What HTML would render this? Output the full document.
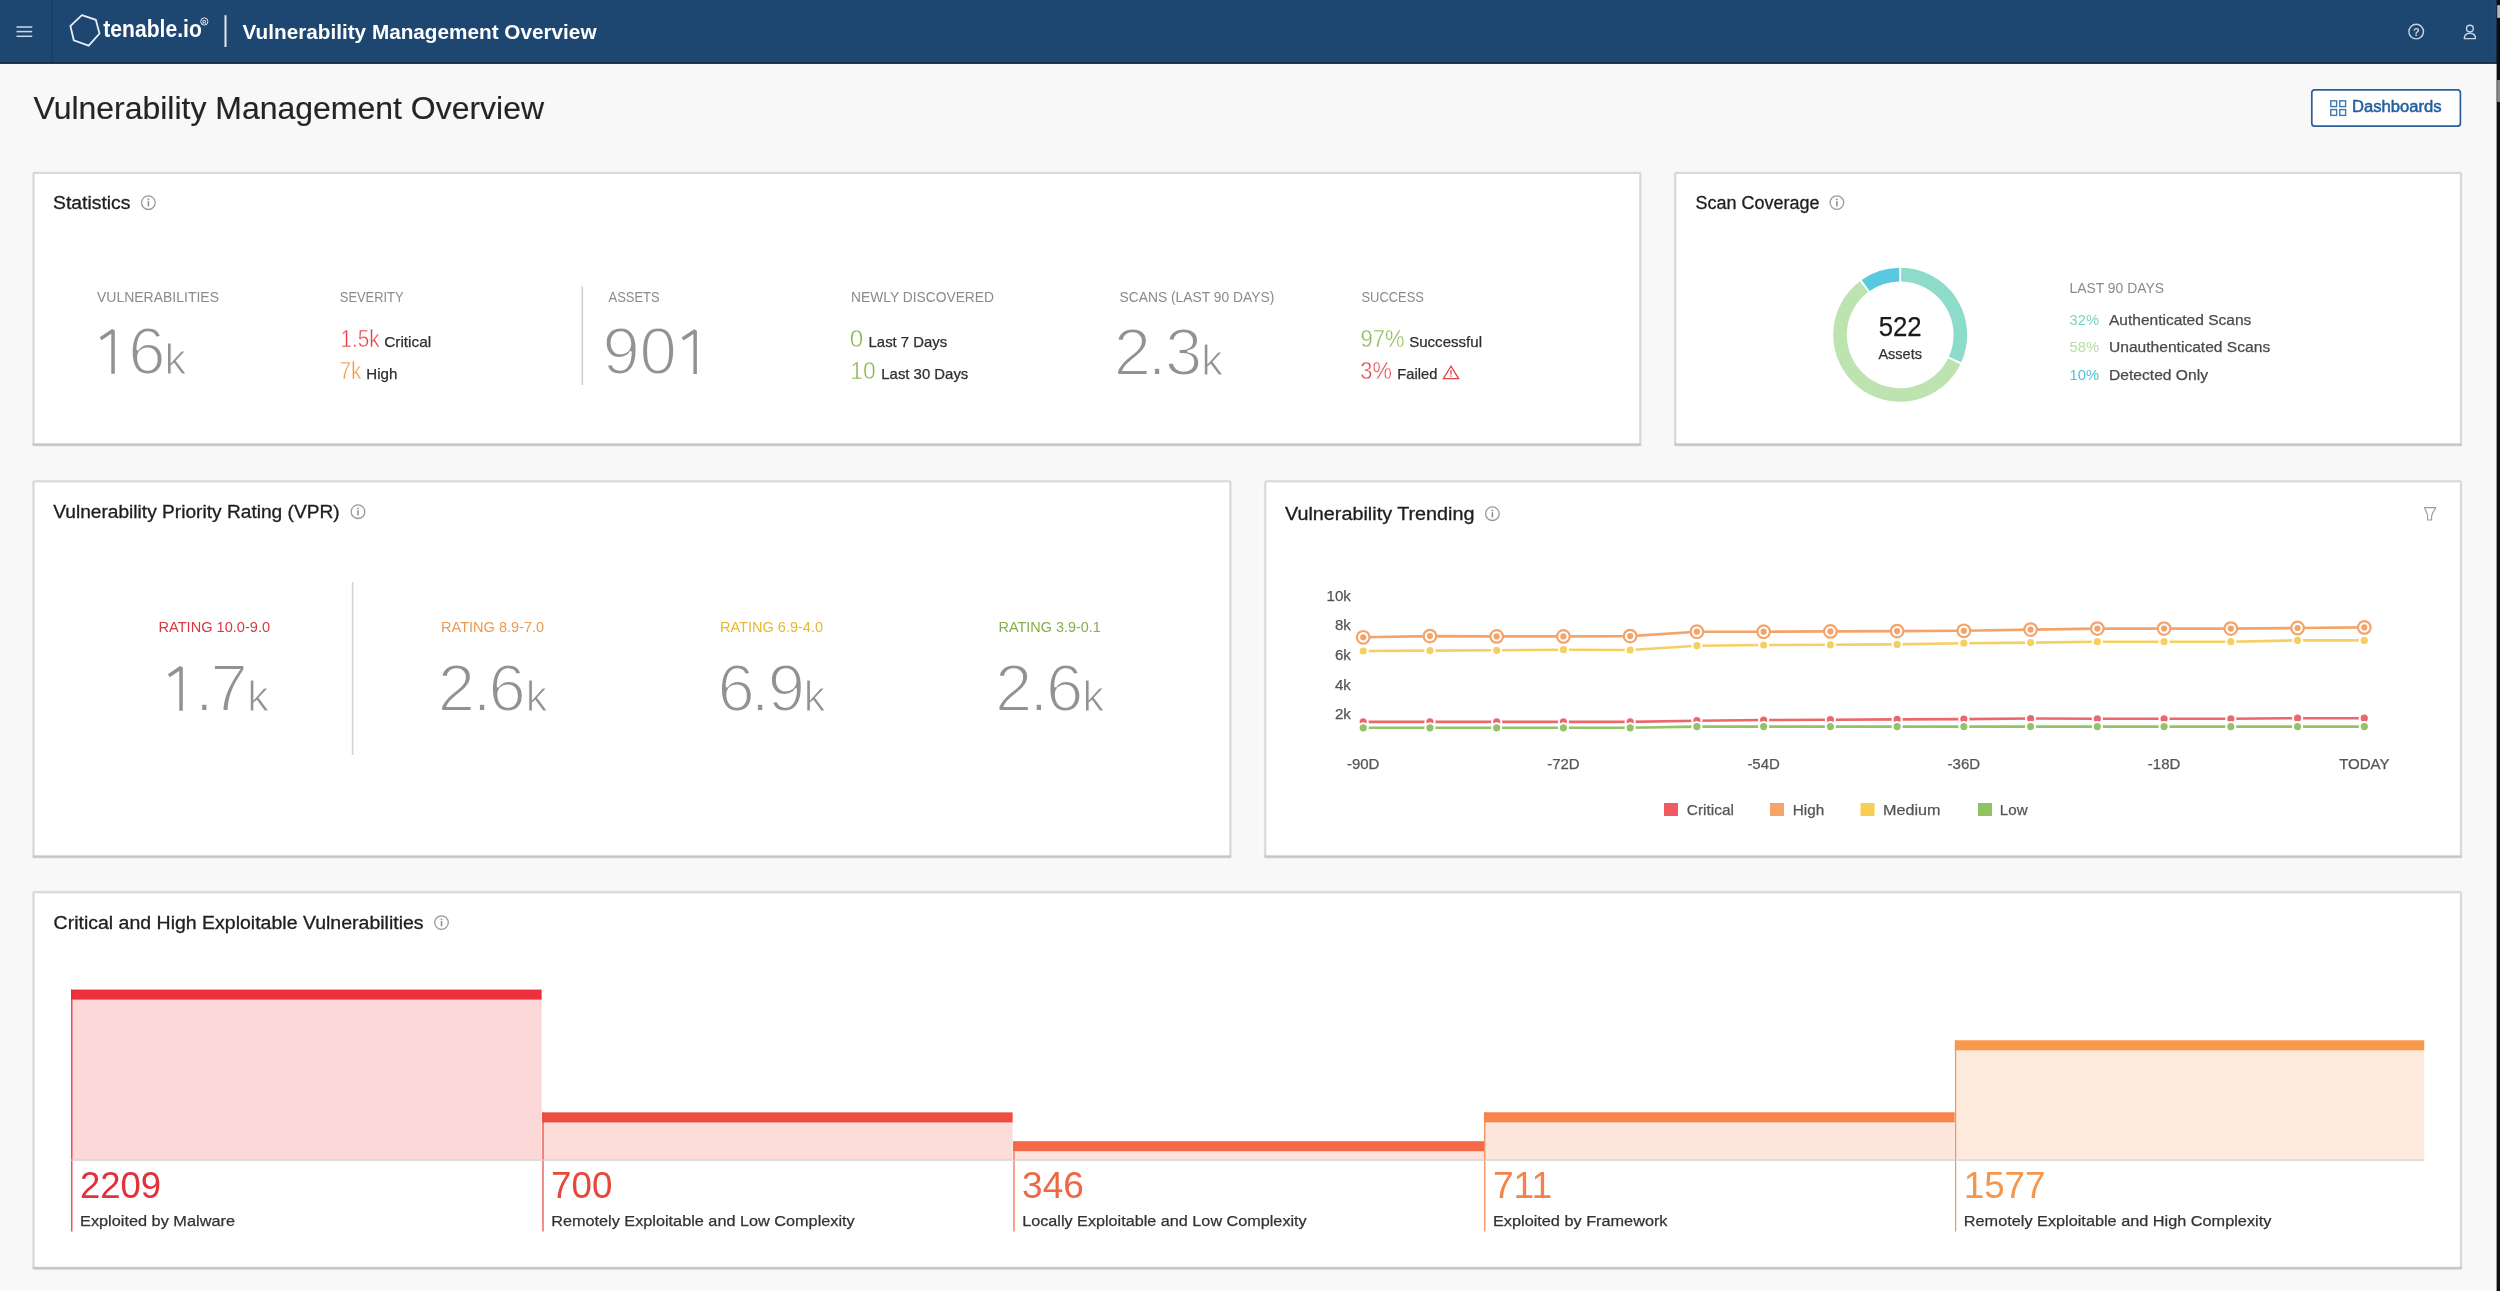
<!DOCTYPE html>
<html><head><meta charset="utf-8"><title>Vulnerability Management Overview</title>
<style>
html,body{margin:0;padding:0;width:2500px;height:1291px;overflow:hidden;background:#f8f8f8;}
svg{display:block;font-family:"Liberation Sans", sans-serif;will-change:transform;}
</style></head><body>
<svg width="2500" height="1291" viewBox="0 0 2500 1291">
<rect x="0" y="0" width="2500" height="1291" fill="#f8f8f8"/>
<rect x="0" y="0" width="2500" height="63.8" fill="#1d4770"/>
<rect x="0" y="59.5" width="2500" height="2.5" fill="#22476d"/>
<rect x="0" y="62" width="2500" height="1.8" fill="#15304c"/>
<rect x="51.5" y="0" width="1.5" height="62" fill="#193e63"/>
<rect x="16.5" y="26.25" width="15.7" height="1.5" fill="#c9d9ea"/>
<rect x="16.5" y="30.85" width="15.7" height="1.5" fill="#c9d9ea"/>
<rect x="16.5" y="35.55" width="15.7" height="1.5" fill="#c9d9ea"/>
<polygon points="81.8,15.2 95.8,19.8 99.5,33.5 88.7,45.6 73.8,40.3 70.4,26" fill="none" stroke="#e6eef7" stroke-width="1.8" stroke-linejoin="miter"/>
<text x="103.3" y="37.4" font-size="24" fill="#ffffff" font-weight="bold" textLength="98.5" lengthAdjust="spacingAndGlyphs">tenable.io</text>
<circle cx="204.3" cy="21.5" r="3.6" fill="none" stroke="#dfe8f2" stroke-width="1"/>
<text x="204.3" y="23.6" font-size="5.5" fill="#dfe8f2" text-anchor="middle" font-weight="bold">R</text>
<rect x="224.5" y="15.2" width="2" height="31.8" fill="#e1e9f2"/>
<text x="242.5" y="38.6" font-size="21" fill="#ffffff" font-weight="bold" textLength="354" lengthAdjust="spacingAndGlyphs">Vulnerability Management Overview</text>
<circle cx="2416.2" cy="31.6" r="7.3" fill="none" stroke="#c6d4e3" stroke-width="1.4"/>
<text x="2416.3" y="35.6" font-size="11" fill="#c6d4e3" text-anchor="middle" font-weight="bold">?</text>
<circle cx="2469.9" cy="28.6" r="3.4" fill="none" stroke="#c6d4e3" stroke-width="1.4"/>
<path d="M2464.3 38.6 C2464.3 35.2 2466.6 33.2 2469.9 33.2 C2473.2 33.2 2475.5 35.2 2475.5 38.6 Z" fill="none" stroke="#c6d4e3" stroke-width="1.4" stroke-linejoin="round"/>
<rect x="2489" y="0" width="0.8" height="61" fill="#1a4169"/>
<rect x="2496.6" y="0" width="3.4" height="1291" fill="#0e0e0e"/>
<rect x="2497.2" y="5" width="2.8" height="13" rx="1" fill="#b9b9b9"/>
<rect x="2497.2" y="80" width="2.8" height="22" fill="#8a8a8a"/>
<text x="33.5" y="119" font-size="30.5" fill="#242424" textLength="510.5" lengthAdjust="spacingAndGlyphs" stroke="#242424" stroke-width="0.15">Vulnerability Management Overview</text>
<rect x="2311.8" y="89.8" width="148.6" height="36.4" rx="3" fill="#ffffff" stroke="#2b5f9b" stroke-width="1.7"/>
<rect x="2330.8" y="100.8" width="5.8" height="5.8" fill="none" stroke="#3d78b3" stroke-width="1.4"/>
<rect x="2339.8" y="100.8" width="5.8" height="5.8" fill="none" stroke="#3d78b3" stroke-width="1.4"/>
<rect x="2330.8" y="109.6" width="5.8" height="5.8" fill="none" stroke="#3d78b3" stroke-width="1.4"/>
<rect x="2339.8" y="109.6" width="5.8" height="5.8" fill="none" stroke="#3d78b3" stroke-width="1.4"/>
<text x="2352" y="112.1" font-size="16" fill="#2260a0" textLength="89.5" lengthAdjust="spacingAndGlyphs" stroke="#2260a0" stroke-width="0.5">Dashboards</text>
<rect x="32.1" y="171.5" width="1609.6000000000001" height="275.3" rx="2.5" fill="#ececec"/>
<rect x="32.6" y="172" width="1608.6000000000001" height="273.8" rx="2" fill="#d8d8d8"/>
<rect x="32.6" y="443.3" width="1608.6000000000001" height="2.5" rx="1" fill="#c6c6c6"/>
<rect x="34.6" y="174" width="1604.6000000000001" height="269.3" fill="#ffffff"/>
<rect x="1673.8" y="171.5" width="788.6000000000001" height="275.3" rx="2.5" fill="#ececec"/>
<rect x="1674.3" y="172" width="787.6000000000001" height="273.8" rx="2" fill="#d8d8d8"/>
<rect x="1674.3" y="443.3" width="787.6000000000001" height="2.5" rx="1" fill="#c6c6c6"/>
<rect x="1676.3" y="174" width="783.6000000000001" height="269.3" fill="#ffffff"/>
<rect x="32.1" y="479.9" width="1199.7" height="378.9" rx="2.5" fill="#ececec"/>
<rect x="32.6" y="480.4" width="1198.7" height="377.4" rx="2" fill="#d8d8d8"/>
<rect x="32.6" y="855.3" width="1198.7" height="2.5" rx="1" fill="#c6c6c6"/>
<rect x="34.6" y="482.4" width="1194.7" height="372.9" fill="#ffffff"/>
<rect x="1263.8" y="479.9" width="1198.6000000000001" height="378.9" rx="2.5" fill="#ececec"/>
<rect x="1264.3" y="480.4" width="1197.6000000000001" height="377.4" rx="2" fill="#d8d8d8"/>
<rect x="1264.3" y="855.3" width="1197.6000000000001" height="2.5" rx="1" fill="#c6c6c6"/>
<rect x="1266.3" y="482.4" width="1193.6000000000001" height="372.9" fill="#ffffff"/>
<rect x="32.1" y="890.8" width="2430.3" height="379.5" rx="2.5" fill="#ececec"/>
<rect x="32.6" y="891.3" width="2429.3" height="378.0" rx="2" fill="#d8d8d8"/>
<rect x="32.6" y="1266.8" width="2429.3" height="2.5" rx="1" fill="#c6c6c6"/>
<rect x="34.6" y="893.3" width="2425.3" height="373.5" fill="#ffffff"/>
<text x="53" y="209.2" font-size="17.6" fill="#1e1e1e" textLength="77.5" lengthAdjust="spacingAndGlyphs" stroke="#1e1e1e" stroke-width="0.3">Statistics</text>
<circle cx="148.4" cy="202.7" r="6.8" fill="none" stroke="#9a9a9a" stroke-width="1.3"/>
<circle cx="148.4" cy="199.39999999999998" r="0.9" fill="#8a8a8a"/>
<rect x="147.65" y="201.2" width="1.5" height="5.2" fill="#8a8a8a"/>
<text x="97" y="301.7" font-size="15" fill="#8a8a8a" textLength="122" lengthAdjust="spacingAndGlyphs">VULNERABILITIES</text>
<text x="339.8" y="301.7" font-size="15" fill="#8a8a8a" textLength="63.8" lengthAdjust="spacingAndGlyphs">SEVERITY</text>
<text x="608.6" y="302" font-size="15" fill="#8a8a8a" textLength="51" lengthAdjust="spacingAndGlyphs">ASSETS</text>
<text x="851" y="301.7" font-size="15" fill="#8a8a8a" textLength="143" lengthAdjust="spacingAndGlyphs">NEWLY DISCOVERED</text>
<text x="1119.5" y="301.7" font-size="15" fill="#8a8a8a" textLength="154.8" lengthAdjust="spacingAndGlyphs">SCANS (LAST 90 DAYS)</text>
<text x="1361.5" y="301.7" font-size="15" fill="#8a8a8a" textLength="62.5" lengthAdjust="spacingAndGlyphs">SUCCESS</text>
<path d="M113.05 373.70 L113.05 330.40 L100.60 338.70" fill="none" stroke="#929292" stroke-width="3.5" stroke-linejoin="miter" stroke-miterlimit="1.6"/>
<text x="128.30" y="373.7" font-size="67" fill="#929292" stroke="#ffffff" stroke-width="2.0">6</text>
<text x="164.53" y="373.7" font-size="43.3" fill="#929292" stroke="#ffffff" stroke-width="1.1">k</text>
<text x="340.5" y="347" font-size="23.5" fill="#e2434b" textLength="39" lengthAdjust="spacingAndGlyphs" stroke="#ffffff" stroke-width="0.45">1.5k</text>
<text x="384.2" y="347" font-size="15" fill="#2e2e2e" textLength="47" lengthAdjust="spacingAndGlyphs" stroke="#2e2e2e" stroke-width="0.25">Critical</text>
<text x="339.5" y="378.5" font-size="23.5" fill="#ef9a4f" textLength="22" lengthAdjust="spacingAndGlyphs" stroke="#ffffff" stroke-width="0.45">7k</text>
<text x="366.3" y="378.5" font-size="15" fill="#2e2e2e" textLength="31" lengthAdjust="spacingAndGlyphs" stroke="#2e2e2e" stroke-width="0.25">High</text>
<rect x="581.5" y="286.6" width="1.6" height="98.5" fill="#d0d0d0"/>
<text x="602.56 639.38" y="374" font-size="67" fill="#929292" stroke="#ffffff" stroke-width="2.0">90</text>
<path d="M695.15 374.00 L695.15 330.70 L682.60 339.00" fill="none" stroke="#929292" stroke-width="3.5" stroke-linejoin="miter" stroke-miterlimit="1.6"/>
<text x="849.8" y="347" font-size="23.5" fill="#88b550" textLength="13.5" lengthAdjust="spacingAndGlyphs" stroke="#ffffff" stroke-width="0.45">0</text>
<text x="868.6" y="347" font-size="15" fill="#2e2e2e" textLength="78.5" lengthAdjust="spacingAndGlyphs" stroke="#2e2e2e" stroke-width="0.25">Last 7 Days</text>
<text x="850.2" y="378.5" font-size="23.5" fill="#88b550" textLength="25.5" lengthAdjust="spacingAndGlyphs" stroke="#ffffff" stroke-width="0.45">10</text>
<text x="881.3" y="378.5" font-size="15" fill="#2e2e2e" textLength="87" lengthAdjust="spacingAndGlyphs" stroke="#2e2e2e" stroke-width="0.25">Last 30 Days</text>
<text x="1113.83 1147.68 1164.95" y="375.4" font-size="67" fill="#929292" stroke="#ffffff" stroke-width="2.0">2.3</text>
<text x="1201.23" y="375.4" font-size="43.3" fill="#929292" stroke="#ffffff" stroke-width="1.1">k</text>
<text x="1360.5" y="347" font-size="23.5" fill="#88b550" textLength="44" lengthAdjust="spacingAndGlyphs" stroke="#ffffff" stroke-width="0.45">97%</text>
<text x="1409.2" y="347" font-size="15" fill="#2e2e2e" textLength="72.8" lengthAdjust="spacingAndGlyphs" stroke="#2e2e2e" stroke-width="0.25">Successful</text>
<text x="1360.3" y="378.5" font-size="23.5" fill="#e2434b" textLength="31.5" lengthAdjust="spacingAndGlyphs" stroke="#ffffff" stroke-width="0.45">3%</text>
<text x="1397.3" y="378.5" font-size="15" fill="#2e2e2e" textLength="40" lengthAdjust="spacingAndGlyphs" stroke="#2e2e2e" stroke-width="0.25">Failed</text>
<path d="M1451 366.2 L1458.6 378.6 L1443.4 378.6 Z" fill="none" stroke="#e0434b" stroke-width="1.3" stroke-linejoin="miter"/>
<rect x="1450.4" y="370" width="1.3" height="4.6" fill="#e0434b"/><rect x="1450.4" y="375.6" width="1.3" height="1.3" fill="#e0434b"/>
<text x="1695.5" y="209.1" font-size="17.6" fill="#1e1e1e" textLength="124" lengthAdjust="spacingAndGlyphs" stroke="#1e1e1e" stroke-width="0.3">Scan Coverage</text>
<circle cx="1836.9" cy="202.6" r="6.8" fill="none" stroke="#9a9a9a" stroke-width="1.3"/>
<circle cx="1836.9" cy="199.29999999999998" r="0.9" fill="#8a8a8a"/>
<rect x="1836.15" y="201.1" width="1.5" height="5.2" fill="#8a8a8a"/>
<path d="M1901.15 274.61 A60.2 60.2 0 0 1 1955.07 359.57" fill="none" stroke="#8ddcca" stroke-width="13.6"/>
<path d="M1954.26 361.28 A60.2 60.2 0 1 1 1864.05 286.66" fill="none" stroke="#bce3b0" stroke-width="13.6"/>
<path d="M1865.58 285.55 A60.2 60.2 0 0 1 1899.25 274.61" fill="none" stroke="#58c9de" stroke-width="13.6"/>
<text x="1900.2" y="336" font-size="27" fill="#1a1a1a" text-anchor="middle" textLength="43" lengthAdjust="spacingAndGlyphs" stroke="#1a1a1a" stroke-width="0.25">522</text>
<text x="1900.2" y="358.5" font-size="15" fill="#333333" text-anchor="middle" textLength="43.5" lengthAdjust="spacingAndGlyphs" stroke="#333333" stroke-width="0.25">Assets</text>
<text x="2069.5" y="293.2" font-size="14.5" fill="#8a8a8a" textLength="94.5" lengthAdjust="spacingAndGlyphs">LAST 90 DAYS</text>
<text x="2069.5" y="324.8" font-size="14.5" fill="#79d3c3" textLength="29.5" lengthAdjust="spacingAndGlyphs">32%</text>
<text x="2109" y="324.8" font-size="15" fill="#4a4a4a" textLength="142.3" lengthAdjust="spacingAndGlyphs" stroke="#4a4a4a" stroke-width="0.25">Authenticated Scans</text>
<text x="2069.5" y="351.8" font-size="14.5" fill="#b4dda6" textLength="29.5" lengthAdjust="spacingAndGlyphs">58%</text>
<text x="2109" y="351.8" font-size="15" fill="#4a4a4a" textLength="161.2" lengthAdjust="spacingAndGlyphs" stroke="#4a4a4a" stroke-width="0.25">Unauthenticated Scans</text>
<text x="2069.5" y="380" font-size="14.5" fill="#4fc2d8" textLength="29.5" lengthAdjust="spacingAndGlyphs">10%</text>
<text x="2109" y="380" font-size="15" fill="#4a4a4a" textLength="99" lengthAdjust="spacingAndGlyphs" stroke="#4a4a4a" stroke-width="0.25">Detected Only</text>
<text x="53.2" y="518.1" font-size="17.6" fill="#1e1e1e" textLength="286.5" lengthAdjust="spacingAndGlyphs" stroke="#1e1e1e" stroke-width="0.3">Vulnerability Priority Rating (VPR)</text>
<circle cx="358" cy="511.7" r="6.8" fill="none" stroke="#9a9a9a" stroke-width="1.3"/>
<circle cx="358" cy="508.4" r="0.9" fill="#8a8a8a"/>
<rect x="357.25" y="510.2" width="1.5" height="5.2" fill="#8a8a8a"/>
<rect x="351.8" y="582" width="1.6" height="173" fill="#d3d3d3"/>
<text x="214.3" y="631.7" font-size="15" fill="#d8373f" text-anchor="middle" textLength="111.5" lengthAdjust="spacingAndGlyphs">RATING 10.0-9.0</text>
<text x="492.6" y="631.7" font-size="15" fill="#ee9a50" text-anchor="middle" textLength="103.2" lengthAdjust="spacingAndGlyphs">RATING 8.9-7.0</text>
<text x="771.5" y="631.7" font-size="15" fill="#e8b830" text-anchor="middle" textLength="103.2" lengthAdjust="spacingAndGlyphs">RATING 6.9-4.0</text>
<text x="1049.7" y="631.7" font-size="15" fill="#86af4b" text-anchor="middle" textLength="102.2" lengthAdjust="spacingAndGlyphs">RATING 3.9-0.1</text>
<path d="M181.05 710.80 L181.05 667.50 L168.80 675.80" fill="none" stroke="#929292" stroke-width="3.5" stroke-linejoin="miter" stroke-miterlimit="1.6"/>
<text x="194.88 210.56" y="710.8" font-size="67" fill="#929292" stroke="#ffffff" stroke-width="2.0">.7</text>
<text x="247.33" y="710.8" font-size="43.3" fill="#929292" stroke="#ffffff" stroke-width="1.1">k</text>
<text x="437.63 472.68 488.60" y="710.8" font-size="67" fill="#929292" stroke="#ffffff" stroke-width="2.0">2.6</text>
<text x="525.63" y="710.8" font-size="43.3" fill="#929292" stroke="#ffffff" stroke-width="1.1">k</text>
<text x="717.40 750.78 767.86" y="710.8" font-size="67" fill="#929292" stroke="#ffffff" stroke-width="2.0">6.9</text>
<text x="803.73" y="710.8" font-size="43.3" fill="#929292" stroke="#ffffff" stroke-width="1.1">k</text>
<text x="995.03 1029.38 1046.10" y="710.8" font-size="67" fill="#929292" stroke="#ffffff" stroke-width="2.0">2.6</text>
<text x="1082.53" y="710.8" font-size="43.3" fill="#929292" stroke="#ffffff" stroke-width="1.1">k</text>
<text x="1285" y="519.5" font-size="17.6" fill="#1e1e1e" textLength="189.5" lengthAdjust="spacingAndGlyphs" stroke="#1e1e1e" stroke-width="0.3">Vulnerability Trending</text>
<circle cx="1492.4" cy="513.7" r="6.8" fill="none" stroke="#9a9a9a" stroke-width="1.3"/>
<circle cx="1492.4" cy="510.40000000000003" r="0.9" fill="#8a8a8a"/>
<rect x="1491.65" y="512.2" width="1.5" height="5.2" fill="#8a8a8a"/>
<path d="M2424.5 507.6 L2435.8 507.6 C2434.2 511.2 2431.6 513.2 2431.6 516.5 L2431.6 520 L2427.6 520 L2427.6 516.5 C2427.6 513.2 2426 511.2 2424.5 507.6 Z" fill="none" stroke="#9a9a9a" stroke-width="1.1" stroke-linejoin="round"/>
<text x="1350.8" y="601" font-size="15" fill="#555555" text-anchor="end" stroke="#555555" stroke-width="0.25">10k</text>
<text x="1350.8" y="629.8" font-size="15" fill="#555555" text-anchor="end" stroke="#555555" stroke-width="0.25">8k</text>
<text x="1350.8" y="659.6" font-size="15" fill="#555555" text-anchor="end" stroke="#555555" stroke-width="0.25">6k</text>
<text x="1350.8" y="689.6" font-size="15" fill="#555555" text-anchor="end" stroke="#555555" stroke-width="0.25">4k</text>
<text x="1350.8" y="719" font-size="15" fill="#555555" text-anchor="end" stroke="#555555" stroke-width="0.25">2k</text>
<text x="1363.2" y="769.4" font-size="15" fill="#555555" text-anchor="middle" stroke="#555555" stroke-width="0.25">-90D</text>
<text x="1563.42" y="769.4" font-size="15" fill="#555555" text-anchor="middle" stroke="#555555" stroke-width="0.25">-72D</text>
<text x="1763.6399999999999" y="769.4" font-size="15" fill="#555555" text-anchor="middle" stroke="#555555" stroke-width="0.25">-54D</text>
<text x="1963.8600000000001" y="769.4" font-size="15" fill="#555555" text-anchor="middle" stroke="#555555" stroke-width="0.25">-36D</text>
<text x="2164.08" y="769.4" font-size="15" fill="#555555" text-anchor="middle" stroke="#555555" stroke-width="0.25">-18D</text>
<text x="2364.3" y="769.4" font-size="15" fill="#555555" text-anchor="middle" stroke="#555555" stroke-width="0.25">TODAY</text>
<path d="M1363.20 721.90 L1429.94 721.90 L1496.68 721.90 L1563.42 721.90 L1630.16 721.90 L1696.90 720.70 L1763.64 720.00 L1830.38 719.70 L1897.12 719.40 L1963.86 719.10 L2030.60 718.50 L2097.34 718.80 L2164.08 718.80 L2230.82 718.80 L2297.56 718.20 L2364.30 718.20" fill="none" stroke="#ec676c" stroke-width="2.6" stroke-linejoin="round"/>
<circle cx="1363.20" cy="721.90" r="4.6" fill="#ec676c" stroke="#ffffff" stroke-width="2"/>
<circle cx="1429.94" cy="721.90" r="4.6" fill="#ec676c" stroke="#ffffff" stroke-width="2"/>
<circle cx="1496.68" cy="721.90" r="4.6" fill="#ec676c" stroke="#ffffff" stroke-width="2"/>
<circle cx="1563.42" cy="721.90" r="4.6" fill="#ec676c" stroke="#ffffff" stroke-width="2"/>
<circle cx="1630.16" cy="721.90" r="4.6" fill="#ec676c" stroke="#ffffff" stroke-width="2"/>
<circle cx="1696.90" cy="720.70" r="4.6" fill="#ec676c" stroke="#ffffff" stroke-width="2"/>
<circle cx="1763.64" cy="720.00" r="4.6" fill="#ec676c" stroke="#ffffff" stroke-width="2"/>
<circle cx="1830.38" cy="719.70" r="4.6" fill="#ec676c" stroke="#ffffff" stroke-width="2"/>
<circle cx="1897.12" cy="719.40" r="4.6" fill="#ec676c" stroke="#ffffff" stroke-width="2"/>
<circle cx="1963.86" cy="719.10" r="4.6" fill="#ec676c" stroke="#ffffff" stroke-width="2"/>
<circle cx="2030.60" cy="718.50" r="4.6" fill="#ec676c" stroke="#ffffff" stroke-width="2"/>
<circle cx="2097.34" cy="718.80" r="4.6" fill="#ec676c" stroke="#ffffff" stroke-width="2"/>
<circle cx="2164.08" cy="718.80" r="4.6" fill="#ec676c" stroke="#ffffff" stroke-width="2"/>
<circle cx="2230.82" cy="718.80" r="4.6" fill="#ec676c" stroke="#ffffff" stroke-width="2"/>
<circle cx="2297.56" cy="718.20" r="4.6" fill="#ec676c" stroke="#ffffff" stroke-width="2"/>
<circle cx="2364.30" cy="718.20" r="4.6" fill="#ec676c" stroke="#ffffff" stroke-width="2"/>
<path d="M1363.20 727.80 L1429.94 727.80 L1496.68 727.80 L1563.42 727.80 L1630.16 727.80 L1696.90 726.60 L1763.64 726.60 L1830.38 726.60 L1897.12 726.60 L1963.86 726.60 L2030.60 726.60 L2097.34 726.60 L2164.08 726.60 L2230.82 726.60 L2297.56 726.60 L2364.30 726.60" fill="none" stroke="#92c36a" stroke-width="2.6" stroke-linejoin="round"/>
<circle cx="1363.20" cy="727.80" r="4.6" fill="#92c36a" stroke="#ffffff" stroke-width="2"/>
<circle cx="1429.94" cy="727.80" r="4.6" fill="#92c36a" stroke="#ffffff" stroke-width="2"/>
<circle cx="1496.68" cy="727.80" r="4.6" fill="#92c36a" stroke="#ffffff" stroke-width="2"/>
<circle cx="1563.42" cy="727.80" r="4.6" fill="#92c36a" stroke="#ffffff" stroke-width="2"/>
<circle cx="1630.16" cy="727.80" r="4.6" fill="#92c36a" stroke="#ffffff" stroke-width="2"/>
<circle cx="1696.90" cy="726.60" r="4.6" fill="#92c36a" stroke="#ffffff" stroke-width="2"/>
<circle cx="1763.64" cy="726.60" r="4.6" fill="#92c36a" stroke="#ffffff" stroke-width="2"/>
<circle cx="1830.38" cy="726.60" r="4.6" fill="#92c36a" stroke="#ffffff" stroke-width="2"/>
<circle cx="1897.12" cy="726.60" r="4.6" fill="#92c36a" stroke="#ffffff" stroke-width="2"/>
<circle cx="1963.86" cy="726.60" r="4.6" fill="#92c36a" stroke="#ffffff" stroke-width="2"/>
<circle cx="2030.60" cy="726.60" r="4.6" fill="#92c36a" stroke="#ffffff" stroke-width="2"/>
<circle cx="2097.34" cy="726.60" r="4.6" fill="#92c36a" stroke="#ffffff" stroke-width="2"/>
<circle cx="2164.08" cy="726.60" r="4.6" fill="#92c36a" stroke="#ffffff" stroke-width="2"/>
<circle cx="2230.82" cy="726.60" r="4.6" fill="#92c36a" stroke="#ffffff" stroke-width="2"/>
<circle cx="2297.56" cy="726.60" r="4.6" fill="#92c36a" stroke="#ffffff" stroke-width="2"/>
<circle cx="2364.30" cy="726.60" r="4.6" fill="#92c36a" stroke="#ffffff" stroke-width="2"/>
<path d="M1363.20 651.00 L1429.94 650.60 L1496.68 650.30 L1563.42 649.70 L1630.16 650.00 L1696.90 645.70 L1763.64 645.00 L1830.38 644.80 L1897.12 644.40 L1963.86 643.20 L2030.60 642.60 L2097.34 641.70 L2164.08 641.70 L2230.82 641.70 L2297.56 640.40 L2364.30 640.40" fill="none" stroke="#f6cf62" stroke-width="2.6" stroke-linejoin="round"/>
<circle cx="1363.20" cy="651.00" r="4.6" fill="#f6cf62" stroke="#ffffff" stroke-width="2"/>
<circle cx="1429.94" cy="650.60" r="4.6" fill="#f6cf62" stroke="#ffffff" stroke-width="2"/>
<circle cx="1496.68" cy="650.30" r="4.6" fill="#f6cf62" stroke="#ffffff" stroke-width="2"/>
<circle cx="1563.42" cy="649.70" r="4.6" fill="#f6cf62" stroke="#ffffff" stroke-width="2"/>
<circle cx="1630.16" cy="650.00" r="4.6" fill="#f6cf62" stroke="#ffffff" stroke-width="2"/>
<circle cx="1696.90" cy="645.70" r="4.6" fill="#f6cf62" stroke="#ffffff" stroke-width="2"/>
<circle cx="1763.64" cy="645.00" r="4.6" fill="#f6cf62" stroke="#ffffff" stroke-width="2"/>
<circle cx="1830.38" cy="644.80" r="4.6" fill="#f6cf62" stroke="#ffffff" stroke-width="2"/>
<circle cx="1897.12" cy="644.40" r="4.6" fill="#f6cf62" stroke="#ffffff" stroke-width="2"/>
<circle cx="1963.86" cy="643.20" r="4.6" fill="#f6cf62" stroke="#ffffff" stroke-width="2"/>
<circle cx="2030.60" cy="642.60" r="4.6" fill="#f6cf62" stroke="#ffffff" stroke-width="2"/>
<circle cx="2097.34" cy="641.70" r="4.6" fill="#f6cf62" stroke="#ffffff" stroke-width="2"/>
<circle cx="2164.08" cy="641.70" r="4.6" fill="#f6cf62" stroke="#ffffff" stroke-width="2"/>
<circle cx="2230.82" cy="641.70" r="4.6" fill="#f6cf62" stroke="#ffffff" stroke-width="2"/>
<circle cx="2297.56" cy="640.40" r="4.6" fill="#f6cf62" stroke="#ffffff" stroke-width="2"/>
<circle cx="2364.30" cy="640.40" r="4.6" fill="#f6cf62" stroke="#ffffff" stroke-width="2"/>
<path d="M1363.20 637.30 L1429.94 636.10 L1496.68 636.40 L1563.42 636.40 L1630.16 636.10 L1696.90 631.70 L1763.64 631.70 L1830.38 631.40 L1897.12 631.10 L1963.86 630.80 L2030.60 629.60 L2097.34 628.60 L2164.08 628.60 L2230.82 628.60 L2297.56 628.00 L2364.30 627.40" fill="none" stroke="#f4a46b" stroke-width="2.6" stroke-linejoin="round"/>
<circle cx="1363.20" cy="637.30" r="6.3" fill="#ffffff" stroke="#f4a46b" stroke-width="2.2"/>
<circle cx="1363.20" cy="637.30" r="3.1" fill="#f4a46b"/>
<circle cx="1429.94" cy="636.10" r="6.3" fill="#ffffff" stroke="#f4a46b" stroke-width="2.2"/>
<circle cx="1429.94" cy="636.10" r="3.1" fill="#f4a46b"/>
<circle cx="1496.68" cy="636.40" r="6.3" fill="#ffffff" stroke="#f4a46b" stroke-width="2.2"/>
<circle cx="1496.68" cy="636.40" r="3.1" fill="#f4a46b"/>
<circle cx="1563.42" cy="636.40" r="6.3" fill="#ffffff" stroke="#f4a46b" stroke-width="2.2"/>
<circle cx="1563.42" cy="636.40" r="3.1" fill="#f4a46b"/>
<circle cx="1630.16" cy="636.10" r="6.3" fill="#ffffff" stroke="#f4a46b" stroke-width="2.2"/>
<circle cx="1630.16" cy="636.10" r="3.1" fill="#f4a46b"/>
<circle cx="1696.90" cy="631.70" r="6.3" fill="#ffffff" stroke="#f4a46b" stroke-width="2.2"/>
<circle cx="1696.90" cy="631.70" r="3.1" fill="#f4a46b"/>
<circle cx="1763.64" cy="631.70" r="6.3" fill="#ffffff" stroke="#f4a46b" stroke-width="2.2"/>
<circle cx="1763.64" cy="631.70" r="3.1" fill="#f4a46b"/>
<circle cx="1830.38" cy="631.40" r="6.3" fill="#ffffff" stroke="#f4a46b" stroke-width="2.2"/>
<circle cx="1830.38" cy="631.40" r="3.1" fill="#f4a46b"/>
<circle cx="1897.12" cy="631.10" r="6.3" fill="#ffffff" stroke="#f4a46b" stroke-width="2.2"/>
<circle cx="1897.12" cy="631.10" r="3.1" fill="#f4a46b"/>
<circle cx="1963.86" cy="630.80" r="6.3" fill="#ffffff" stroke="#f4a46b" stroke-width="2.2"/>
<circle cx="1963.86" cy="630.80" r="3.1" fill="#f4a46b"/>
<circle cx="2030.60" cy="629.60" r="6.3" fill="#ffffff" stroke="#f4a46b" stroke-width="2.2"/>
<circle cx="2030.60" cy="629.60" r="3.1" fill="#f4a46b"/>
<circle cx="2097.34" cy="628.60" r="6.3" fill="#ffffff" stroke="#f4a46b" stroke-width="2.2"/>
<circle cx="2097.34" cy="628.60" r="3.1" fill="#f4a46b"/>
<circle cx="2164.08" cy="628.60" r="6.3" fill="#ffffff" stroke="#f4a46b" stroke-width="2.2"/>
<circle cx="2164.08" cy="628.60" r="3.1" fill="#f4a46b"/>
<circle cx="2230.82" cy="628.60" r="6.3" fill="#ffffff" stroke="#f4a46b" stroke-width="2.2"/>
<circle cx="2230.82" cy="628.60" r="3.1" fill="#f4a46b"/>
<circle cx="2297.56" cy="628.00" r="6.3" fill="#ffffff" stroke="#f4a46b" stroke-width="2.2"/>
<circle cx="2297.56" cy="628.00" r="3.1" fill="#f4a46b"/>
<circle cx="2364.30" cy="627.40" r="6.3" fill="#ffffff" stroke="#f4a46b" stroke-width="2.2"/>
<circle cx="2364.30" cy="627.40" r="3.1" fill="#f4a46b"/>
<rect x="1664" y="803" width="14" height="13" fill="#ef5b61"/>
<text x="1686.8" y="815" font-size="15" fill="#555555" textLength="47.2" lengthAdjust="spacingAndGlyphs" stroke="#555555" stroke-width="0.25">Critical</text>
<rect x="1770" y="803" width="14" height="13" fill="#f6a56a"/>
<text x="1792.8" y="815" font-size="15" fill="#555555" textLength="31.5" lengthAdjust="spacingAndGlyphs" stroke="#555555" stroke-width="0.25">High</text>
<rect x="1860.5" y="803" width="14" height="13" fill="#f6cf52"/>
<text x="1883" y="815" font-size="15" fill="#555555" textLength="57.5" lengthAdjust="spacingAndGlyphs" stroke="#555555" stroke-width="0.25">Medium</text>
<rect x="1978" y="803" width="14" height="13" fill="#90c262"/>
<text x="1999.8" y="815" font-size="15" fill="#555555" textLength="27.8" lengthAdjust="spacingAndGlyphs" stroke="#555555" stroke-width="0.25">Low</text>
<text x="53.6" y="929.4" font-size="17.6" fill="#1e1e1e" textLength="370" lengthAdjust="spacingAndGlyphs" stroke="#1e1e1e" stroke-width="0.3">Critical and High Exploitable Vulnerabilities</text>
<circle cx="441.5" cy="922.6" r="6.8" fill="none" stroke="#9a9a9a" stroke-width="1.3"/>
<circle cx="441.5" cy="919.3000000000001" r="0.9" fill="#8a8a8a"/>
<rect x="440.75" y="921.1" width="1.5" height="5.2" fill="#8a8a8a"/>
<rect x="71.0" y="989.6" width="470.6" height="170.39999999999998" fill="#fcd8d9"/>
<rect x="71.0" y="989.6" width="470.6" height="10" fill="#ee2f3c"/>
<rect x="542.2" y="1112.4" width="470.4" height="47.59999999999991" fill="#fdddda"/>
<rect x="542.2" y="1112.4" width="470.4" height="10" fill="#f04d41"/>
<rect x="1013.2" y="1141.2" width="470.79999999999995" height="18.799999999999955" fill="#fde1da"/>
<rect x="1013.2" y="1141.2" width="470.79999999999995" height="10" fill="#f56948"/>
<rect x="1484" y="1112.3" width="470.79999999999995" height="47.700000000000045" fill="#fde6dc"/>
<rect x="1484" y="1112.3" width="470.79999999999995" height="10" fill="#f8834b"/>
<rect x="1954.8" y="1040.3" width="469.39999999999986" height="119.70000000000005" fill="#fdeadd"/>
<rect x="1954.8" y="1040.3" width="469.39999999999986" height="10" fill="#f99a4b"/>
<rect x="71.2" y="989.6" width="1.2" height="241.89999999999998" fill="#e3303a"/>
<rect x="542.4000000000001" y="1112.4" width="1.2" height="119.09999999999991" fill="#e7473d"/>
<rect x="1013.4000000000001" y="1141.2" width="1.2" height="90.29999999999995" fill="#ee6845"/>
<rect x="1484.2" y="1112.3" width="1.2" height="119.20000000000005" fill="#f4834b"/>
<rect x="1955.0" y="1040.3" width="1.2" height="191.20000000000005" fill="#f4974c"/>
<rect x="71" y="1159.5" width="2353.2" height="1.2" fill="#d0d0d0"/>
<text x="79.9" y="1197.6" font-size="36" fill="#e3303a" textLength="81.3" lengthAdjust="spacingAndGlyphs">2209</text>
<text x="80.0" y="1226.2" font-size="15.5" fill="#333333" textLength="155" lengthAdjust="spacingAndGlyphs" stroke="#333333" stroke-width="0.25">Exploited by Malware</text>
<text x="551.1" y="1197.6" font-size="36" fill="#e7473d" textLength="61.3" lengthAdjust="spacingAndGlyphs">700</text>
<text x="551.2" y="1226.2" font-size="15.5" fill="#333333" textLength="303.5" lengthAdjust="spacingAndGlyphs" stroke="#333333" stroke-width="0.25">Remotely Exploitable and Low Complexity</text>
<text x="1022.1" y="1197.6" font-size="36" fill="#ee6845" textLength="61.8" lengthAdjust="spacingAndGlyphs">346</text>
<text x="1022.2" y="1226.2" font-size="15.5" fill="#333333" textLength="284.5" lengthAdjust="spacingAndGlyphs" stroke="#333333" stroke-width="0.25">Locally Exploitable and Low Complexity</text>
<text x="1492.9" y="1197.6" font-size="36" fill="#f4834b" textLength="59.3" lengthAdjust="spacingAndGlyphs">711</text>
<text x="1493" y="1226.2" font-size="15.5" fill="#333333" textLength="174.5" lengthAdjust="spacingAndGlyphs" stroke="#333333" stroke-width="0.25">Exploited by Framework</text>
<text x="1963.7" y="1197.6" font-size="36" fill="#f4974c" textLength="81.8" lengthAdjust="spacingAndGlyphs">1577</text>
<text x="1963.8" y="1226.2" font-size="15.5" fill="#333333" textLength="307.5" lengthAdjust="spacingAndGlyphs" stroke="#333333" stroke-width="0.25">Remotely Exploitable and High Complexity</text>
</svg></body></html>
